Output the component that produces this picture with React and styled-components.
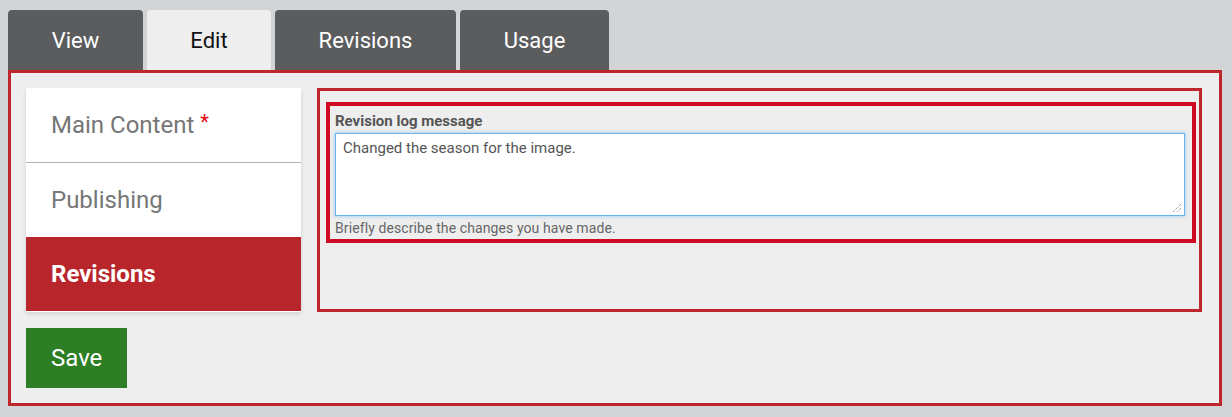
import React from "react";
import styled, { createGlobalStyle } from "styled-components";

const Global = createGlobalStyle`
  html, body { margin: 0; padding: 0; background: #d3d4d6; }
  body { font-family: Roboto, "Liberation Sans", Arial, sans-serif; }
  * { box-sizing: border-box; }
`;

const Page = styled.div`
  padding: 10px 10px 0 8px;
  width: 1232px;
`;

const Tabs = styled.div`
  display: flex;
  gap: 4px;
`;

const Tab = styled.div`
  height: 60px;
  width: ${(p) => p.$w}px;
  border-radius: 4px 4px 0 0;
  background: ${(p) => (p.$active ? "#eeeeee" : "#5b5c5e")};
  color: ${(p) => (p.$active ? "#111" : "#fff")};
  font-size: 22px;
  display: flex;
  align-items: center;
  justify-content: center;
  padding-top: 1px;
`;

const Frame = styled.div`
  width: 1214px;
  height: 336px;
  border: 3px solid #bc262c;
  background: #eeeeee;
  padding: 15px 17px 15px 15px;
  display: grid;
  grid-template-columns: 275px 1fr;
  grid-template-rows: 224px 60px;
  column-gap: 16px;
  row-gap: 16px;
`;

const Sidebar = styled.div`
  display: flex;
  flex-direction: column;
  background: #fff;
  box-shadow: 0 2px 4px rgba(0, 0, 0, 0.12);
`;

const SideItem = styled.div`
  display: flex;
  align-items: center;
  padding: 0 25px;
  font-size: 24px;
  color: ${(p) => (p.$active ? "#fff" : "#767676")};
  font-weight: ${(p) => (p.$active ? 700 : 400)};
  background: ${(p) => (p.$active ? "#b8262c" : "#fff")};
  border-top: ${(p) => (p.$divider ? "1px solid #b2b2aa" : "none")};
  height: ${(p) => (p.$divider ? 75 : 74)}px;
`;

const Required = styled.span`
  color: #e3060f;
  margin-left: 6px;
  font-size: 20px;
  position: relative;
  top: -3px;
`;

const Content = styled.div`
  border: 3px solid #bc262c;
  padding: 11px 3px 0 6px;
`;

const FieldBox = styled.div`
  border: 4px solid #cf0a22;
  padding: 6px 7px 2px 5px;
  display: flex;
  flex-direction: column;
`;

const Label = styled.label`
  font-size: 15px;
  font-weight: 700;
  color: #555;
  line-height: 18px;
  margin-bottom: 3px;
`;

const TextArea = styled.div`
  height: 83px;
  background: #fff;
  border: 1px solid #66b3ee;
  box-shadow: 0 0 4px rgba(80, 165, 235, 0.55);
  padding: 5px 7px;
  font-size: 15px;
  color: #555;
  line-height: 18px;
  position: relative;
`;

const Grip = styled.svg`
  position: absolute;
  right: 2px;
  bottom: 2px;
`;

const Help = styled.div`
  font-size: 14px;
  letter-spacing: 0.1px;
  color: #666;
  line-height: 18px;
  margin-top: 3px;
`;

const SaveButton = styled.button`
  width: 101px;
  height: 60px;
  background: #2d7e25;
  color: #fff;
  border: none;
  font-family: inherit;
  font-size: 24px;
  text-align: left;
  padding: 0 0 1px 25px;
  cursor: pointer;
`;

export default function App() {
  return (
    <Page>
      <Global />
      <Tabs>
        <Tab $w={135}>View</Tab>
        <Tab $w={124} $active>Edit</Tab>
        <Tab $w={181}>Revisions</Tab>
        <Tab $w={149}>Usage</Tab>
      </Tabs>
      <Frame>
        <Sidebar>
          <SideItem>
            Main Content<Required>*</Required>
          </SideItem>
          <SideItem $divider>Publishing</SideItem>
          <SideItem $active>Revisions</SideItem>
        </Sidebar>
        <Content>
          <FieldBox>
            <Label>Revision log message</Label>
            <TextArea>
              Changed the season for the image.
              <Grip width="10" height="10" viewBox="0 0 10 10">
                <path d="M9 1L1 9M9 5L5 9" stroke="#777" strokeWidth="1" strokeDasharray="1 1" />
              </Grip>
            </TextArea>
            <Help>Briefly describe the changes you have made.</Help>
          </FieldBox>
        </Content>
        <div>
          <SaveButton>Save</SaveButton>
        </div>
      </Frame>
    </Page>
  );
}
